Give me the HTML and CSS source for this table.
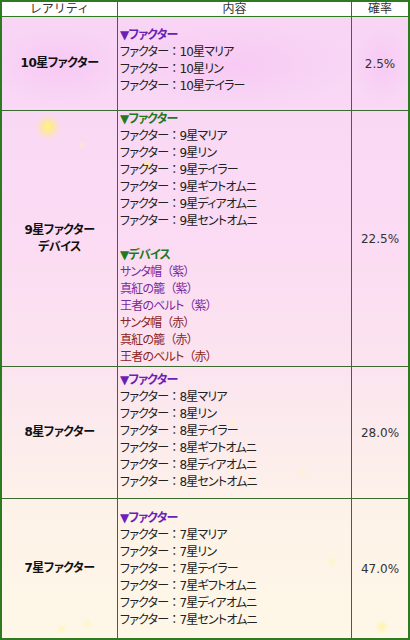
FILE: index.html
```html
<!DOCTYPE html>
<html lang="ja">
<head>
<meta charset="utf-8">
<title>ガチャ確率</title>
<link rel="stylesheet" href="styles.css">
</head>
<body>
<table class="gacha">
  <colgroup>
    <col class="c1"><col class="c2"><col class="c3">
  </colgroup>
  <thead>
    <tr class="head">
      <th>レアリティ</th>
      <th>内容</th>
      <th>確率</th>
    </tr>
  </thead>
  <tbody>
    <tr class="r1">
      <td class="label">10星ファクター</td>
      <td class="items">
        <div class="cat purple">▼ファクター</div>
        <div>ファクター<span class="fw">：</span>10星マリア</div>
        <div>ファクター<span class="fw">：</span>10星リン</div>
        <div>ファクター<span class="fw">：</span>10星テイラー</div>
      </td>
      <td class="rate">2.5%</td>
    </tr>
    <tr class="r2">
      <td class="label">9星ファクター<br>デバイス</td>
      <td class="items">
        <div class="cat green">▼ファクター</div>
        <div>ファクター<span class="fw">：</span>9星マリア</div>
        <div>ファクター<span class="fw">：</span>9星リン</div>
        <div>ファクター<span class="fw">：</span>9星テイラー</div>
        <div>ファクター<span class="fw">：</span>9星ギフトオムニ</div>
        <div>ファクター<span class="fw">：</span>9星ディアオムニ</div>
        <div>ファクター<span class="fw">：</span>9星セントオムニ</div>
        <div class="blank"></div>
        <div class="cat green">▼デバイス</div>
        <div class="violet">サンタ帽<span class="fw">（紫）</span></div>
        <div class="violet">真紅の籠<span class="fw">（紫）</span></div>
        <div class="violet">王者のベルト<span class="fw">（紫）</span></div>
        <div class="red">サンタ帽<span class="fw">（赤）</span></div>
        <div class="red">真紅の籠<span class="fw">（赤）</span></div>
        <div class="red">王者のベルト<span class="fw">（赤）</span></div>
      </td>
      <td class="rate">22.5%</td>
    </tr>
    <tr class="r3">
      <td class="label">8星ファクター</td>
      <td class="items">
        <div class="cat purple">▼ファクター</div>
        <div>ファクター<span class="fw">：</span>8星マリア</div>
        <div>ファクター<span class="fw">：</span>8星リン</div>
        <div>ファクター<span class="fw">：</span>8星テイラー</div>
        <div>ファクター<span class="fw">：</span>8星ギフトオムニ</div>
        <div>ファクター<span class="fw">：</span>8星ディアオムニ</div>
        <div>ファクター<span class="fw">：</span>8星セントオムニ</div>
      </td>
      <td class="rate">28.0%</td>
    </tr>
    <tr class="r4">
      <td class="label">7星ファクター</td>
      <td class="items">
        <div class="cat purple">▼ファクター</div>
        <div>ファクター<span class="fw">：</span>7星マリア</div>
        <div>ファクター<span class="fw">：</span>7星リン</div>
        <div>ファクター<span class="fw">：</span>7星テイラー</div>
        <div>ファクター<span class="fw">：</span>7星ギフトオムニ</div>
        <div>ファクター<span class="fw">：</span>7星ディアオムニ</div>
        <div>ファクター<span class="fw">：</span>7星セントオムニ</div>
      </td>
      <td class="rate">47.0%</td>
    </tr>
  </tbody>
</table>
</body>
</html>
```

FILE: styles.css
```css
html, body {
  margin: 0;
  padding: 0;
  background: #ffffff;
}

.gacha {
  width: 410px;
  border-collapse: separate;
  border-spacing: 0;
  border: 2px solid #2e7a20;
  table-layout: fixed;
  font-family: "DejaVu Sans", "Noto Sans CJK JP", sans-serif;
  font-size: 12px;
  color: #222;
  background-color: #fbe2f2;
  background-image:
    radial-gradient(circle at 46px 125px, rgba(255,250,110,1) 0, rgba(255,240,110,0.65) 4px, rgba(255,240,150,0) 13px),
    radial-gradient(circle at 145px 163px, rgba(255,245,140,0.8) 0, rgba(255,245,160,0) 6px),
    radial-gradient(circle at 80px 143px, rgba(255,245,170,0.6) 0, rgba(255,245,170,0) 4px),
    radial-gradient(circle at 380px 625px, rgba(255,245,140,0.7) 0, rgba(255,245,160,0) 7px),
    radial-gradient(circle at 60px 627px, rgba(255,245,150,0.6) 0, rgba(255,245,160,0) 5px),
    radial-gradient(circle at 85px 622px, rgba(255,245,150,0.5) 0, rgba(255,245,160,0) 5px),
    radial-gradient(circle at 230px 420px, rgba(255,245,170,0.5) 0, rgba(255,245,170,0) 5px),
    radial-gradient(circle at 330px 560px, rgba(255,245,170,0.5) 0, rgba(255,245,170,0) 6px),
    radial-gradient(circle at 300px 470px, rgba(255,245,170,0.4) 0, rgba(255,245,170,0) 5px),
    radial-gradient(ellipse 70px 40px at 58px 63px, rgba(246,190,242,0.55) 0, rgba(246,190,242,0) 100%),
    radial-gradient(ellipse 120px 45px at 234px 63px, rgba(246,190,242,0.5) 0, rgba(246,190,242,0) 100%),
    radial-gradient(ellipse 30px 40px at 380px 63px, rgba(246,190,242,0.5) 0, rgba(246,190,242,0) 100%),
    linear-gradient(to bottom, #f8d4f5 0px, #f9d8f5 110px, #fbdcf3 250px, #fbe4ef 366px, #fcedec 450px, #fdf3e8 520px, #fef7e6 640px);
}

.c1 { width: 115px; }
.c2 { width: 234px; }
.c3 { width: 57px; }

.gacha th,
.gacha td {
  padding: 0;
  box-sizing: border-box;
  border-left: 1px solid #3b6a30;
  border-top: 1px solid #3b6a30;
}

.gacha th:first-child,
.gacha td:first-child {
  border-left: 0;
}

.head th {
  border-top: 0;
  height: 14px;
  line-height: 14px;
  font-weight: normal;
  color: #333;
  background: #ffffff;
  font-size: 12px;
}

.gacha tbody tr:first-child td {
  border-top: 1px solid #2e7a20;
}

.label {
  text-align: center;
  vertical-align: middle;
  font-weight: bold;
  color: #111;
  line-height: 17px;
  font-feature-settings: "palt";
  letter-spacing: -0.5px;
}

.rate {
  text-align: center;
  vertical-align: middle;
  color: #333;
}

.items {
  vertical-align: top;
  padding-left: 2px !important;
  line-height: 17px;
  font-feature-settings: "palt";
  letter-spacing: -0.8px;
}

.items div {
  height: 17px;
  white-space: nowrap;
}

.fw {
  font-feature-settings: normal;
  letter-spacing: -1px;
}

.r1 td { height: 94px; }
.r2 td { height: 256px; }
.r3 td { height: 132px; }
.r4 td { height: 140px; }

.r1 .items { padding-top: 10px !important; }
.r3 .items { padding-top: 5px !important; }
.r4 .items { padding-top: 11px !important; }

.cat { font-weight: bold; }
.purple { color: #6a1fb5; }
.green { color: #1f7a1f; }
.violet { color: #7a2a9c; }
.red { color: #8a2424; }
```
